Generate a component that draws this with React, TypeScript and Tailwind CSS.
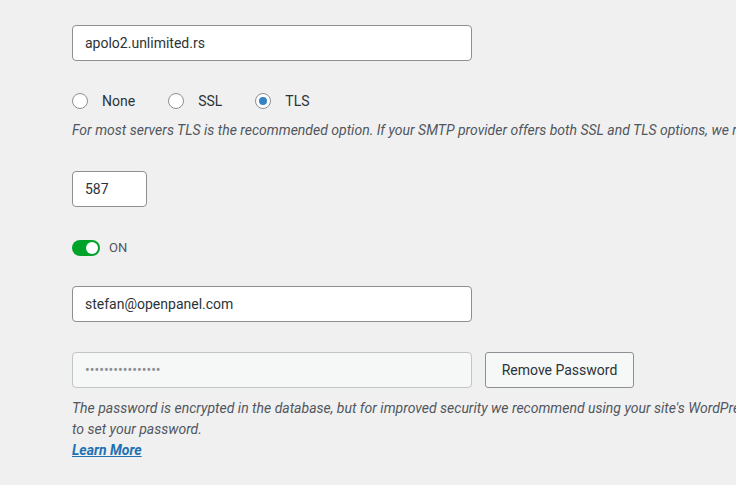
import React from 'react';

const Radio = ({ label, checked }: { label: string; checked?: boolean }) => (
  <label className="flex items-center">
    <span className="flex h-4 w-4 items-center justify-center rounded-full border border-[#8c8f94] bg-white">
      {checked && <span className="h-2 w-2 rounded-full bg-[#3582c4]" />}
    </span>
    <span className="ml-[14px] text-[14px] text-[#2c3338]">{label}</span>
  </label>
);

export default function App() {
  return (
    <div
      className="h-[485px] w-full overflow-hidden bg-[#f0f0f1] pl-[72px]"
      style={{ fontFamily: 'Roboto, "Noto Sans", sans-serif' }}
    >
      <div className="flex flex-col items-start">
        <input
          type="text"
          defaultValue="apolo2.unlimited.rs"
          className="mt-[25px] h-[36px] w-[400px] rounded-[4px] border border-[#8c8f94] bg-white px-[12px] text-[14px] text-[#2c3338] outline-none"
        />

        <div className="mt-[28px] flex h-6 items-center gap-[33px]">
          <Radio label="None" />
          <Radio label="SSL" />
          <Radio label="TLS" checked />
        </div>
        <p className="mt-[7px] whitespace-nowrap text-[14px] italic leading-[21px] text-[#50575e]">
          For most servers TLS is the recommended option. If your SMTP provider offers both SSL and TLS options, we recommend using TLS.
        </p>

        <input
          type="text"
          defaultValue="587"
          className="mt-[30px] h-[36px] w-[75px] rounded-[4px] border border-[#8c8f94] bg-white px-[12px] text-[14px] text-[#2c3338] outline-none"
        />

        <div className="mt-[33px] flex h-4 items-center">
          <span className="flex h-4 w-[28px] items-center justify-end rounded-full bg-[#00a32a] pr-[2px]">
            <span className="h-3 w-3 rounded-full bg-white" />
          </span>
          <span className="ml-[9px] text-[13px] text-[#50575e]">ON</span>
        </div>

        <input
          type="text"
          defaultValue="stefan@openpanel.com"
          className="mt-[30px] h-[36px] w-[400px] rounded-[4px] border border-[#8c8f94] bg-white px-[12px] text-[14px] text-[#2c3338] outline-none"
        />

        <div className="mt-[30px] flex items-center gap-[13px]">
          <input
            type="password"
            readOnly
            defaultValue="abcdefghijklmnop"
            className="h-[36px] w-[400px] rounded-[4px] border border-[#c3c4c7] bg-[#f6f7f7] px-[12px] text-[14px] text-[#8c8f94] outline-none"
          />
          <button className="h-[36px] w-[149px] rounded-[3px] border border-[#8c8f94] bg-[#f6f7f7] text-[14px] text-[#2c3338]">
            Remove Password
          </button>
        </div>
        <p className="mt-[10px] whitespace-nowrap text-[14px] italic leading-[21px] text-[#50575e]">
          The password is encrypted in the database, but for improved security we recommend using your site's WordPress configuration file
          <br />
          to set your password.
          <br />
          <a href="#" className="font-bold text-[#2271b1] underline">
            Learn More
          </a>
        </p>
      </div>
    </div>
  );
}
